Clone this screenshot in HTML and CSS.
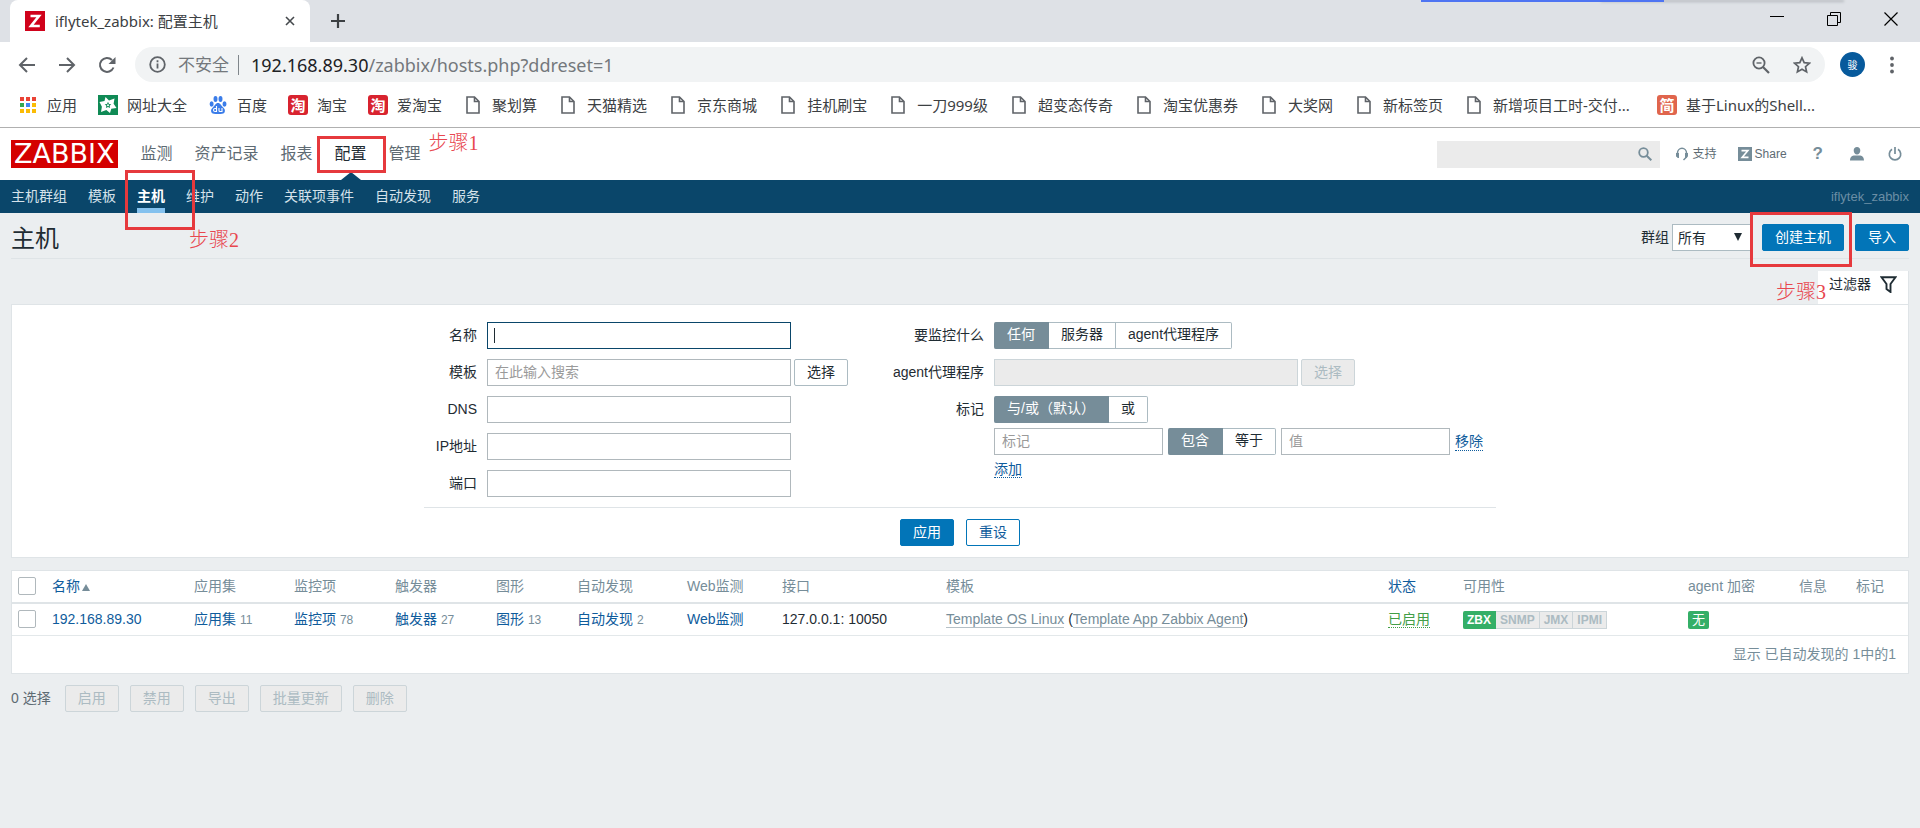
FILE: index.html
```html
<!DOCTYPE html>
<html lang="zh-CN">
<head>
<meta charset="utf-8">
<title>iflytek_zabbix: 配置主机</title>
<link rel="stylesheet" href="styles.css">
</head>
<body>
<svg class="defs" aria-hidden="true">
  <symbol id="doc" viewBox="0 0 14 18"><path d="M1 1h7.500l4.500 4.500V17H1z M8.500 1v4.500H13" fill="none" stroke="#5f6368" stroke-width="1.600"/></symbol>
</svg>

<header class="browser">
  <div class="tabstrip">
    <div class="tab">
      <svg class="favicon" viewBox="0 0 20 20"><path fill="#d0021b" d="M0 0h20v20H0z"/><path d="M5.500 5h8.500L6 15h8.800" fill="none" stroke="#fff" stroke-width="2.600"/></svg>
      <span class="tab-title">iflytek_zabbix: 配置主机</span>
      <button class="plain" aria-label="关闭标签页"><svg width="10" height="10" viewBox="0 0 10 10"><path d="M1 1l8 8M9 1L1 9" stroke="#45494d" stroke-width="1.600"/></svg></button>
    </div>
    <button class="plain" aria-label="新标签页"><svg width="16" height="16" viewBox="0 0 16 16"><path d="M8 1v14M1 8h14" stroke="#3c4043" stroke-width="2.200"/></svg></button>
    <div class="overlay-edge"></div>
    <div class="window-controls">
      <button class="plain" aria-label="最小化"><svg width="14" height="14" viewBox="0 0 14 14"><path d="M0 4.500h14" stroke="#000"/></svg></button>
      <button class="plain" aria-label="还原"><svg width="14" height="14" viewBox="0 0 14 14"><path d="M.5 3.500h10v10H.5zM3.500 3.500v-3h10v10h-3" fill="none" stroke="#000"/></svg></button>
      <button class="plain" aria-label="关闭"><svg width="14" height="14" viewBox="0 0 14 14"><path d="M.5 .5l13 13M13.500 .5l-13 13" stroke="#000" stroke-width="1.200"/></svg></button>
    </div>
  </div>
  <div class="toolbar">
    <div class="history">
      <button class="plain" aria-label="后退"><svg width="18" height="18" viewBox="0 0 18 18"><path d="M17 9H2M9 2L2 9l7 7" fill="none" stroke="#5f6368" stroke-width="2"/></svg></button>
      <button class="plain" aria-label="前进"><svg width="18" height="18" viewBox="0 0 18 18"><path d="M1 9h15M9 2l7 7-7 7" fill="none" stroke="#5f6368" stroke-width="2"/></svg></button>
      <button class="plain" aria-label="重新加载"><svg width="18" height="18" viewBox="0 0 18 18"><path d="M15.500 11.500A7 7 0 1 1 14 4" fill="none" stroke="#5f6368" stroke-width="2"/><path d="M17.500 1v7h-7z" fill="#5f6368"/></svg></button>
    </div>
    <div class="omnibox">
      <svg width="17" height="17" viewBox="0 0 17 17"><circle cx="8.500" cy="8.500" r="7.300" fill="none" stroke="#5f6368" stroke-width="1.800"/><path d="M8.500 7.500v5M8.500 4.200v2" stroke="#5f6368" stroke-width="1.800"/></svg>
      <span class="insecure">不安全</span>
      <span class="url"><b>192.168.89.30</b>/zabbix/hosts.php?ddreset=1</span>
      <button class="plain" aria-label="缩放"><svg width="18" height="18" viewBox="0 0 18 18"><circle cx="7" cy="7" r="5.600" fill="none" stroke="#5f6368" stroke-width="1.800"/><path d="M11 11l6 6" stroke="#5f6368" stroke-width="2.200"/><path d="M4.500 7h5" stroke="#5f6368" stroke-width="1.400"/></svg></button>
      <button class="plain" aria-label="收藏"><svg width="18" height="18" viewBox="0 0 18 18"><path d="M9 1.800l2.200 4.900 5.200.5-3.900 3.500 1.100 5.200L9 13.200l-4.600 2.700 1.100-5.200L1.600 7.200l5.200-.5z" fill="none" stroke="#5f6368" stroke-width="1.700"/></svg></button>
    </div>
    <button class="avatar">骏</button>
    <button class="plain" aria-label="菜单"><svg width="4" height="18" viewBox="0 0 4 18"><g fill="#5f6368"><circle cx="2" cy="2.500" r="1.900"/><circle cx="2" cy="9" r="1.900"/><circle cx="2" cy="15.500" r="1.900"/></g></svg></button>
  </div>
  <nav class="bookmarks">
    <a href="#"><svg class="bm" viewBox="0 0 20 20"><path fill="#ea4335" d="M2 2h4v4H2zM8 2h4v4H8zM14 2h4v4h-4z"/><path fill="#34a853" d="M2 8h4v4H2z"/><path fill="#4285f4" d="M8 8h4v4H8z"/><path fill="#fbbc05" d="M14 8h4v4h-4zM2 14h4v4H2zM8 14h4v4H8zM14 14h4v4h-4z"/></svg>应用</a>
    <a href="#"><svg class="bm" viewBox="0 0 20 20"><path fill="#0f8a55" d="M0 0h20v20H0z"/><path fill="#fff" d="M7.500 2l3.500 3.600 5.500-2.100-.9 5.300L18.500 13l-5.200.8L12 18l-3.700-2.900L3 17l.9-5.200L1.500 7l5-.9z"/><path d="M10 6.800l1 2.100 2.300.3-1.700 1.600.5 2.300-2.100-1.100-2.100 1.100.5-2.300-1.700-1.600 2.300-.3z" fill="#0f8a55"/><circle cx="10" cy="10.300" r="1" fill="#fff"/></svg>网址大全</a>
    <a href="#"><svg class="bm" viewBox="0 0 20 20"><g fill="#3b7de9"><ellipse cx="3.600" cy="9" rx="2" ry="2.700"/><ellipse cx="7.500" cy="4" rx="2" ry="2.900"/><ellipse cx="12.500" cy="4" rx="2" ry="2.900"/><ellipse cx="16.500" cy="9" rx="2" ry="2.700"/><path d="M10 8c2.500 0 3 2.500 5 4.300 1.800 1.500 2.300 3 1.700 4.700-.8 2.300-3 1.900-6.700 1.900s-5.900.4-6.700-1.900c-.6-1.700 0-3.200 1.700-4.700C7 10.500 7.500 8 10 8z"/></g><path d="M8.500 11v5.500H7a1.500 1.500 0 0 1 0-3h1.500M11 13v2.500c0 1 .5 1 1 1h2V13" fill="none" stroke="#fff" stroke-width="1.100"/></svg>百度</a>
    <a href="#"><span class="bm tao">淘</span>淘宝</a>
    <a href="#"><span class="bm tao">淘</span>爱淘宝</a>
    <a href="#"><svg class="bm doc"><use href="#doc"/></svg>聚划算</a>
    <a href="#"><svg class="bm doc"><use href="#doc"/></svg>天猫精选</a>
    <a href="#"><svg class="bm doc"><use href="#doc"/></svg>京东商城</a>
    <a href="#"><svg class="bm doc"><use href="#doc"/></svg>挂机刷宝</a>
    <a href="#"><svg class="bm doc"><use href="#doc"/></svg>一刀999级</a>
    <a href="#"><svg class="bm doc"><use href="#doc"/></svg>超变态传奇</a>
    <a href="#"><svg class="bm doc"><use href="#doc"/></svg>淘宝优惠券</a>
    <a href="#"><svg class="bm doc"><use href="#doc"/></svg>大奖网</a>
    <a href="#"><svg class="bm doc"><use href="#doc"/></svg>新标签页</a>
    <a href="#" class="full"><svg class="bm doc"><use href="#doc"/></svg>新增项目工时-交付...</a>
    <a href="#"><span class="bm jian">简</span>基于Linux的Shell...</a>
  </nav>
</header>

<div class="topnav">
  <a class="logo" href="#">ZABBIX</a>
  <nav class="menu">
    <a href="#">监测</a>
    <a href="#">资产记录</a>
    <a href="#">报表</a>
    <a href="#" class="current">配置<i class="ring ring-config"></i></a>
    <a href="#">管理<span class="step step-1">步骤1</span></a>
  </nav>
  <div class="tools">
    <div class="search">
      <input type="text" aria-label="搜索">
      <svg width="14" height="14" viewBox="0 0 14 14"><circle cx="5.500" cy="5.500" r="4.300" fill="none" stroke="#768d99" stroke-width="1.800"/><path d="M8.700 8.700l4.600 4.600" stroke="#768d99" stroke-width="2"/></svg>
    </div>
    <a href="#" class="support"><svg width="14" height="14" viewBox="0 0 14 14"><path d="M2.500 10V6a4.500 4.700 0 0 1 9 0v4l-3 3" fill="none" stroke="#768d99" stroke-width="1.500"/><path d="M1 6h3v5H2.800L1 9.300zM10 6h3v3.300L11.200 11H10z" fill="#768d99"/></svg>支持</a>
    <a href="#" class="share"><svg width="14" height="14" viewBox="0 0 14 14"><path fill="#768d99" d="M0 0h14v14H0z"/><path d="M3.500 3.700h6.300L4.200 10.300h6.300" fill="none" stroke="#fff" stroke-width="1.700"/></svg>Share</a>
    <a href="#" class="help">?</a>
    <a href="#" aria-label="用户"><svg width="14" height="14" viewBox="0 0 14 14"><path fill="#768d99" d="M7 0c2 0 3.300 1.400 3.300 3.500S9 7.500 7 7.500 3.700 5.600 3.700 3.500 5 0 7 0zM0 13.500c0-4 2.500-5 4.500-5h5c2 0 4.500 1 4.500 5z"/></svg></a>
    <a href="#" aria-label="退出"><svg width="14" height="14" viewBox="0 0 14 14"><path d="M4 2.300a5.700 5.700 0 1 0 6 0M7 0v7" fill="none" stroke="#768d99" stroke-width="1.700"/></svg></a>
  </div>
</div>

<nav class="subnav">
  <a href="#">主机群组</a>
  <a href="#">模板</a>
  <a href="#" class="selected">主机<i class="ring ring-host"></i><span class="step step-2">步骤2</span></a>
  <a href="#">维护</a>
  <a href="#">动作</a>
  <a href="#">关联项事件</a>
  <a href="#">自动发现</a>
  <a href="#">服务</a>
  <span class="server">iflytek_zabbix</span>
</nav>

<main>
  <div class="title-row">
    <h1>主机</h1>
    <form class="title-tools">
      <label for="group">群组</label>
      <span class="select"><select id="group"><option>所有</option></select><i></i></span>
      <span class="create"><button type="button" class="btn primary">创建主机</button><i class="ring ring-create"></i><span class="step step-3">步骤3</span></span>
      <button type="button" class="btn primary">导入</button>
    </form>
  </div>

  <div class="filter-tab-row">
    <a href="#" class="filter-tab">过滤器<svg width="17" height="17" viewBox="0 0 17 17"><path d="M1.500 1.200h14L10.500 8v8l-4-3V8z" fill="none" stroke="#1f2c33" stroke-width="1.900"/></svg></a>
  </div>
  <form class="filter">
    <div class="filter-cols">
      <div class="fields">
        <label for="f-name">名称</label><div><input id="f-name" class="wide focused" type="text"></div>
        <label for="f-tpl">模板</label><div><input id="f-tpl" class="wide" type="text" placeholder="在此输入搜索"><button type="button" class="btn pick">选择</button></div>
        <label for="f-dns">DNS</label><div><input id="f-dns" class="wide" type="text"></div>
        <label for="f-ip">IP地址</label><div><input id="f-ip" class="wide" type="text"></div>
        <label for="f-port">端口</label><div><input id="f-port" class="wide" type="text"></div>
      </div>
      <div class="fields right">
        <span class="label">要监控什么</span>
        <div class="seg"><label><input type="radio" name="mon" checked><span>任何</span></label><label><input type="radio" name="mon"><span>服务器</span></label><label><input type="radio" name="mon"><span>agent代理程序</span></label></div>
        <label for="f-proxy">agent代理程序</label>
        <div><input id="f-proxy" class="wide" type="text" disabled><button type="button" class="btn pick" disabled>选择</button></div>
        <span class="label">标记</span>
        <div class="tags">
          <div class="seg"><label><input type="radio" name="eval" checked><span>与/或（默认）</span></label><label><input type="radio" name="eval"><span>或</span></label></div>
          <div class="tag-row">
            <input class="half" type="text" placeholder="标记" aria-label="标记">
            <div class="seg"><label><input type="radio" name="op" checked><span>包含</span></label><label><input type="radio" name="op"><span>等于</span></label></div>
            <input class="half" type="text" placeholder="值" aria-label="值">
            <a href="#" class="dotted">移除</a>
          </div>
          <div class="add"><a href="#" class="dotted">添加</a></div>
        </div>
      </div>
    </div>
    <div class="filter-actions">
      <button type="button" class="btn primary">应用</button>
      <button type="button" class="btn outline">重设</button>
    </div>
  </form>

  <div class="list">
    <table>
      <colgroup><col class="c34"><col class="c142"><col class="c100"><col class="c101"><col class="c101"><col class="c81"><col class="c110"><col class="c95"><col class="c164"><col class="c442"><col class="c75"><col class="c225"><col class="c111"><col class="c57"><col class="c58"></colgroup>
      <thead><tr>
        <th><input type="checkbox" aria-label="全选"></th>
        <th><a href="#">名称<i class="sort"></i></a></th><th>应用集</th><th>监控项</th><th>触发器</th><th>图形</th><th>自动发现</th><th>Web监测</th><th>接口</th><th>模板</th><th><a href="#">状态</a></th><th>可用性</th><th>agent 加密</th><th>信息</th><th>标记</th>
      </tr></thead>
      <tbody><tr>
        <td><input type="checkbox" aria-label="192.168.89.30"></td>
        <td><a href="#">192.168.89.30</a></td>
        <td><a href="#">应用集</a> <small>11</small></td>
        <td><a href="#">监控项</a> <small>78</small></td>
        <td><a href="#">触发器</a> <small>27</small></td>
        <td><a href="#">图形</a> <small>13</small></td>
        <td><a href="#">自动发现</a> <small>2</small></td>
        <td><a href="#">Web监测</a></td>
        <td>127.0.0.1: 10050</td>
        <td><a href="#" class="tpl">Template OS Linux</a> (<a href="#" class="tpl">Template App Zabbix Agent</a>)</td>
        <td><a href="#" class="dotted green">已启用</a></td>
        <td><span class="avail"><b class="on">ZBX</b><b>SNMP</b><b>JMX</b><b>IPMI</b></span></td>
        <td><span class="badge">无</span></td>
        <td></td><td></td>
      </tr></tbody>
    </table>
    <div class="list-foot">显示 已自动发现的 1中的1</div>
  </div>

  <div class="bulk">
    <span class="count">0 选择</span>
    <button class="btn" disabled>启用</button>
    <button class="btn" disabled>禁用</button>
    <button class="btn" disabled>导出</button>
    <button class="btn" disabled>批量更新</button>
    <button class="btn" disabled>删除</button>
  </div>
</main>
</body>
</html>
```

FILE: styles.css
```css
* { box-sizing: border-box; }
body {
  margin: 0;
  min-height: 100vh;
  background: #ebeef0;
  color: #1f2c33;
  font: 14px/20px "Liberation Sans", Arial, "Noto Sans CJK SC", sans-serif;
}
a { text-decoration: none; color: #0f5c9c; }
button, input, select { font: inherit; color: inherit; margin: 0; }
svg { display: block; flex: none; }
.defs { position: absolute; width: 0; height: 0; }
.plain { border: 0; padding: 0; background: none; }

/* browser chrome */
.browser {
  background: #fff;
  border-bottom: 1px solid #b0b0b0;
  font-family: "Noto Sans", "Noto Sans CJK SC", sans-serif;
  color: #3c4043;
}
.tabstrip {
  display: flex;
  align-items: center;
  height: 42px;
  padding: 0 22px 0 10px;
  background: #dee1e6;
}
.tab {
  display: flex;
  align-items: center;
  width: 300px;
  height: 42px;
  margin-right: 20px;
  padding: 0 15px;
  border-radius: 8px 8px 0 0;
  background: #fff;
}
.favicon { width: 20px; height: 20px; margin-right: 10px; }
.tab-title { flex: 1; font-size: 15px; }
.overlay-edge {
  align-self: flex-start;
  width: 243px;
  height: 2px;
  margin-left: auto;
  background: #4e74f2;
  box-shadow: 180px 0 3px #b0b4b9;
}
.window-controls { display: flex; gap: 43px; margin-left: 106px; padding-bottom: 4px; }
.toolbar { display: flex; align-items: center; height: 45px; padding: 0 26px 0 18px; }
.history { display: flex; gap: 22px; margin-right: 19px; }
.omnibox {
  display: flex;
  flex: 1;
  align-items: center;
  height: 35px;
  margin-right: 15px;
  padding: 0 14px;
  border-radius: 18px;
  background: #f1f3f4;
  color: #74787c;
  font-size: 17px;
}
.omnibox .plain { margin-left: 23px; }
.insecure { margin: 0 12px; padding-right: 9px; border-right: 1px solid #80868b; line-height: 20px; }
.url { flex: 1; font-size: 18px; }
.url b { font-weight: normal; color: #202124; }
.avatar {
  width: 25px;
  height: 25px;
  margin-right: 25px;
  padding: 0;
  border: 0;
  border-radius: 50%;
  background: #075a9c;
  color: #fff;
  font-size: 10px;
}
.bookmarks {
  display: flex;
  gap: 21px;
  align-items: center;
  height: 40px;
  padding: 0 18px 4px;
  font-size: 15px;
  white-space: nowrap;
}
.bookmarks a { display: flex; align-items: center; gap: 9px; color: #3c4043; }
.bookmarks .full { min-width: 172px; }
.bm { width: 20px; height: 20px; }
.doc { height: 18px; }
.tao, .jian { border-radius: 3px; background: #d8232f; color: #fff; font-size: 15px; font-weight: bold; text-align: center; }
.jian { background: #e0654d; }

/* zabbix header */
.topnav { display: flex; align-items: center; height: 52px; padding: 0 18px 0 11px; background: #fff; }
.logo { padding: 0 4px 0 3px; background: #d40000; color: #fff; font: 27px/28px "DejaVu Sans", sans-serif; }
.menu { display: flex; gap: 22px; margin-left: 22px; font-size: 16px; }
.menu a { position: relative; color: #5e6b73; line-height: 52px; }
.menu .current { color: #1f2c33; }
.menu .current::after {
  content: "";
  position: absolute;
  left: 6px;
  bottom: 0;
  border: 10px solid transparent;
  border-top: 0;
  border-bottom: 8px solid #0a466a;
}
.tools { display: flex; align-items: center; margin-left: auto; font-size: 12px; }
.tools a { display: flex; align-items: center; gap: 3px; color: #5e6b73; }
.search { display: flex; align-items: center; width: 223px; height: 27px; margin-right: 15px; padding-right: 8px; background: #ebebeb; }
.search input { flex: 1; min-width: 0; border: 0; background: none; }
.tools .support { gap: 4px; margin-right: 21px; }
.share { margin-right: 26px; }
.tools .help { margin-right: 27px; font-size: 17px; font-weight: bold; color: #768d99; }
.help + a { margin-right: 24px; }

.subnav {
  display: flex;
  gap: 21px;
  height: 33px;
  padding: 0 11px;
  background: #0a466a;
  line-height: 33px;
}
.subnav a { position: relative; color: #d5e2ea; }
.subnav .selected { color: #fff; font-weight: bold; box-shadow: inset 0 -5px #84c1ee; }
.server { margin-left: auto; color: #6b8ea5; font-size: 13px; }

/* step callouts */
.ring { position: absolute; border: 3px solid #e6393d; z-index: 2; }
.ring-config { left: -18px; top: 8px; width: 69px; height: 37px; }
.ring-host { left: -12px; top: -10px; width: 70px; height: 60px; }
.ring-create { left: -12px; top: -12px; width: 102px; height: 55px; }
.step {
  position: absolute;
  z-index: 2;
  color: #e8474f;
  font: 20px/20px "Liberation Serif", "Noto Sans CJK SC", serif;
  font-weight: 300;
  white-space: nowrap;
}
.step-1 { left: 40px; top: 5px; }
.step-2 { left: 52px; top: 50px; }
.step-3 { left: 14px; top: 58px; }

/* page */
main { padding: 0 11px; }
.title-row { display: flex; justify-content: space-between; height: 46px; padding-top: 11px; border-bottom: 1px solid #dfe4e7; }
h1 { margin: 0; font-size: 24px; line-height: 30px; font-weight: normal; }
.title-tools { display: flex; align-items: flex-start; line-height: 27px; }
.select { position: relative; margin: 0 10px 0 3px; }
.select select {
  display: block;
  width: 80px;
  height: 27px;
  padding: 0 5px;
  border: 1px solid #acbbc2;
  appearance: none;
  background: #fff;
}
.select i {
  position: absolute;
  top: 9px;
  right: 10px;
  border: 4px solid transparent;
  border-bottom: 0;
  border-top: 8px solid #1f2c33;
  pointer-events: none;
}
.create { position: relative; margin-right: 11px; }
.btn {
  height: 27px;
  padding: 0 12px;
  border: 1px solid #acbbc2;
  border-radius: 2px;
  background: #fff;
  line-height: 23px;
  vertical-align: top;
}
.primary { border-color: #0275b8; background: #0275b8; color: #fff; }
.outline { border-color: #0275b8; color: #0f5c9c; }
.btn:disabled { border-color: #ccd5d9; background: #ebebeb; color: #acbbc2; }

.filter-tab-row { display: flex; justify-content: flex-end; margin-top: 12px; }
.filter-tab {
  position: relative;
  display: flex;
  gap: 9px;
  padding: 3px 11px 10px;
  background: #fff;
  border-right: 1px solid #dfe4e7;
  color: #1f2c33;
}
.filter-tab svg { margin-top: 2px; }
.filter { border: 1px solid #dfe4e7; background: #fff; padding-bottom: 11px; }
.filter-cols { display: flex; gap: 44px; width: 1072px; margin: 0 auto; padding: 17px 0 10px; border-bottom: 1px solid #dfe4e7; }
.fields { display: grid; grid-template-columns: 53px auto; gap: 10px; align-content: start; line-height: 27px; }
.fields > label, .fields > .label { text-align: right; white-space: nowrap; }
.fields.right { grid-template-columns: 92px auto; }
.filter input[type="text"] { height: 27px; padding: 0 7px; border: 1px solid #b0b8bc; background: #fff; vertical-align: top; }
.filter input::placeholder { color: #9a9a9a; opacity: 1; }
.filter input.wide { width: 304px; }
.filter input.half { width: 169px; }
.filter input.focused { border-color: #0a466a; background: linear-gradient(#1f2c33, #1f2c33) 6px 5px / 1px 15px no-repeat #fff; }
.filter input:disabled { border-color: #ccd5d9; background: #ebebeb; }
.pick { margin-left: 3px; }
.seg { display: flex; line-height: 23px; }
.seg label { position: relative; }
.seg input { position: absolute; opacity: 0; }
.seg span { display: block; height: 27px; padding: 0 12px; border: 1px solid #acbbc2; border-left-width: 0; background: #fff; }
.seg input:checked + span { padding: 0 13px; border-color: #768d99; background: #768d99; color: #fff; }
.seg label:first-child span { border-radius: 2px 0 0 2px; }
.seg label:last-child span { border-radius: 0 2px 2px 0; }
.tag-row { display: flex; gap: 5px; margin-top: 5px; }
.add { line-height: 29px; }
.dotted { line-height: 17px; align-self: center; border-bottom: 1px dotted; }
.filter-actions { display: flex; justify-content: center; gap: 12px; padding-top: 11px; }

.list { margin-top: 12px; border: 1px solid #dfe4e7; background: #fff; }
table { width: 100%; table-layout: fixed; border-collapse: collapse; }
th, td { height: 32px; padding: 0 6px; text-align: left; font-weight: normal; white-space: nowrap; border-bottom: 1px solid #e3e8ea; }
th { padding-bottom: 2px; color: #768d99; border-bottom: 2px solid #dfe4e7; }
small { color: #768d99; font-size: 12px; }
input[type="checkbox"] { display: block; appearance: none; width: 18px; height: 18px; border: 1px solid #b0b8bc; border-radius: 2px; background: #fff; }
.c34 { width: 34px; } .c142 { width: 142px; } .c100 { width: 100px; } .c101 { width: 101px; }
.c81 { width: 81px; } .c110 { width: 110px; } .c95 { width: 95px; } .c164 { width: 164px; }
.c442 { width: 442px; } .c75 { width: 75px; } .c225 { width: 225px; } .c111 { width: 111px; }
.c57 { width: 57px; } .c58 { width: 58px; }
.sort { display: inline-block; margin-left: 2px; border: 4px solid transparent; border-top: 0; border-bottom: 7px solid #768d99; }
.tpl { color: #768d99; border-bottom: 1px solid #b5c0c6; }
.green { color: #429e47; }
.avail { display: inline-flex; font-size: 12px; line-height: 16px; vertical-align: middle; }
.avail b { padding: 0 4px; border: 1px solid #ccd5d9; border-left-width: 0; background: #ebebeb; color: #acbbc2; }
.avail .on { border-color: #34af67; border-radius: 2px 0 0 2px; background: #34af67; color: #fff; }
.badge { display: inline-block; padding: 0 4px; border-radius: 2px; background: #34af67; color: #fff; font-size: 13px; line-height: 18px; vertical-align: middle; }
.list-foot { padding: 8px 12px 9px; text-align: right; color: #768d99; }
.bulk { display: flex; align-items: center; gap: 11px; margin-top: 11px; }
.count { margin-right: 3px; color: #5e6b73; }
```
